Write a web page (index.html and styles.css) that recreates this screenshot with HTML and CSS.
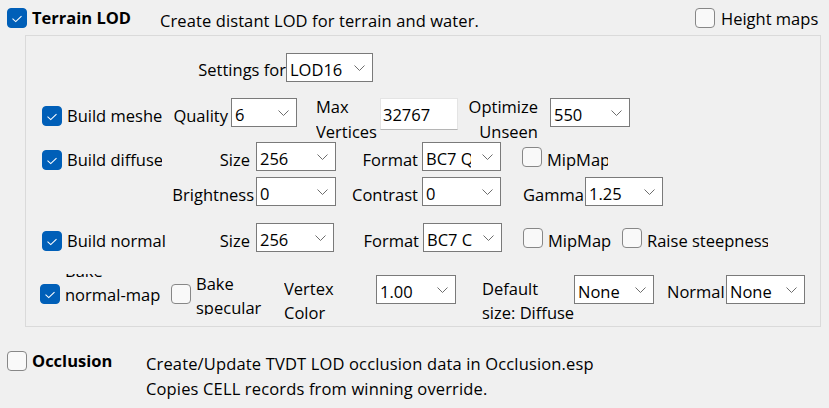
FILE: index.html
```html
<!DOCTYPE html>
<html>
<head>
<meta charset="utf-8">
<link rel="stylesheet" href="styles.css">
</head>
<body>
<div class="header">
  <span class="box on hdr-box"><svg class="tick" viewBox="0 0 20 20"><path d="M5 10.8 L8.6 14 L15 7.8"/></svg></span>
  <span class="title">Terrain LOD</span>
  <span class="hdesc">Create distant LOD for terrain and water.</span>
  <span class="box hm-box"></span>
  <span class="hm-txt">Height maps</span>
</div>

<div class="group">
  <div class="row r-set">
    <span class="lbl l-set">Settings for</span>
    <div class="combo c-lod"><span class="val">LOD16</span><svg class="chev" viewBox="0 0 11 6"><path d="M0.5 0.5 L5.5 5.5 L10.5 0.5"/></svg></div>
  </div>

  <div class="row r1">
    <div class="chk chk-b"><span class="box on"><svg class="tick" viewBox="0 0 20 20"><path d="M5 10.8 L8.6 14 L15 7.8"/></svg></span><span class="ct">Build meshes</span></div>
    <span class="lbl l-quality">Quality</span>
    <div class="combo c-q"><span class="val">6</span><svg class="chev" viewBox="0 0 11 6"><path d="M0.5 0.5 L5.5 5.5 L10.5 0.5"/></svg></div>
    <span class="lbl l-maxv">Max<br>Vertices</span>
    <div class="inp">32767</div>
    <span class="lbl l-opt">Optimize<br>Unseen</span>
    <div class="combo c-550"><span class="val">550</span><svg class="chev" viewBox="0 0 11 6"><path d="M0.5 0.5 L5.5 5.5 L10.5 0.5"/></svg></div>
  </div>

  <div class="row r2">
    <div class="chk chk-b"><span class="box on"><svg class="tick" viewBox="0 0 20 20"><path d="M5 10.8 L8.6 14 L15 7.8"/></svg></span><span class="ct">Build diffuse</span></div>
    <span class="lbl l-size">Size</span>
    <div class="combo c-size"><span class="val">256</span><svg class="chev" viewBox="0 0 11 6"><path d="M0.5 0.5 L5.5 5.5 L10.5 0.5"/></svg></div>
    <span class="lbl l-fmt">Format</span>
    <div class="combo c-fmt"><span class="val">BC7 Quality</span><svg class="chev" viewBox="0 0 11 6"><path d="M0.5 0.5 L5.5 5.5 L10.5 0.5"/></svg></div>
    <div class="chk sm chk-mip"><span class="box"></span><span class="ct">MipMaps</span></div>
  </div>

  <div class="row r3">
    <span class="lbl l-bright">Brightness</span>
    <div class="combo c-size"><span class="val">0</span><svg class="chev" viewBox="0 0 11 6"><path d="M0.5 0.5 L5.5 5.5 L10.5 0.5"/></svg></div>
    <span class="lbl l-fmt">Contrast</span>
    <div class="combo c-fmt"><span class="val">0</span><svg class="chev" viewBox="0 0 11 6"><path d="M0.5 0.5 L5.5 5.5 L10.5 0.5"/></svg></div>
    <span class="lbl l-gamma">Gamma</span>
    <div class="combo c-gamma"><span class="val">1.25</span><svg class="chev" viewBox="0 0 11 6"><path d="M0.5 0.5 L5.5 5.5 L10.5 0.5"/></svg></div>
  </div>

  <div class="row r4">
    <div class="chk chk-b noclip"><span class="box on"><svg class="tick" viewBox="0 0 20 20"><path d="M5 10.8 L8.6 14 L15 7.8"/></svg></span><span class="ct">Build normal</span></div>
    <span class="lbl l-size">Size</span>
    <div class="combo c-size2"><span class="val">256</span><svg class="chev" viewBox="0 0 11 6"><path d="M0.5 0.5 L5.5 5.5 L10.5 0.5"/></svg></div>
    <span class="lbl l-fmt2">Format</span>
    <div class="combo c-fmt"><span class="val">BC7 Compressed</span><svg class="chev" viewBox="0 0 11 6"><path d="M0.5 0.5 L5.5 5.5 L10.5 0.5"/></svg></div>
    <div class="chk sm chk-mip2"><span class="box"></span><span class="ct">MipMap</span></div>
    <div class="chk sm chk-raise"><span class="box"></span><span class="ct">Raise steepness</span></div>
  </div>

  <div class="row r5">
    <div class="chk chk-bnm"><span class="box on"><svg class="tick" viewBox="0 0 20 20"><path d="M5 10.8 L8.6 14 L15 7.8"/></svg></span><span class="cclip cc-top"><span class="cin cin-top">Bake<br>normal-map</span></span></div>
    <div class="chk chk-bs"><span class="box"></span><span class="cclip cc-bot"><span class="cin">Bake<br>specular</span></span></div>
    <span class="lbl l-vc">Vertex<br>Color</span>
    <div class="combo c-100"><span class="val">1.00</span><svg class="chev" viewBox="0 0 11 6"><path d="M0.5 0.5 L5.5 5.5 L10.5 0.5"/></svg></div>
    <span class="lbl l-def">Default<br>size: Diffuse</span>
    <div class="combo c-none"><span class="val">None</span><svg class="chev" viewBox="0 0 11 6"><path d="M0.5 0.5 L5.5 5.5 L10.5 0.5"/></svg></div>
    <span class="lbl l-normal">Normal</span>
    <div class="combo c-none2"><span class="val">None</span><svg class="chev" viewBox="0 0 11 6"><path d="M0.5 0.5 L5.5 5.5 L10.5 0.5"/></svg></div>
  </div>
</div>

<div class="occ">
  <span class="box occ-box"></span>
  <span class="occ-title">Occlusion</span>
  <span class="occ-desc">Create/Update TVDT LOD occlusion data in Occlusion.esp<br>Copies CELL records from winning override.</span>
</div>
</body>
</html>
```

FILE: styles.css
```css
html, body {
  margin: 0;
  padding: 0;
}
body {
  width: 829px;
  height: 408px;
  overflow: hidden;
  background: #f0f0f0;
  color: #000;
  font-family: "Open Sans", "Noto Sans", sans-serif;
  font-size: 16.5px;
  line-height: 24px;
}

/* checkbox */
.box {
  flex: none;
  display: block;
  width: 20px;
  height: 20px;
  box-sizing: border-box;
  border: 1px solid #878787;
  border-radius: 4px;
  background: #f9f9f9;
}
.box.on {
  background: #005fb8;
  border-color: #005fb8;
}
.tick {
  display: block;
  width: 18px;
  height: 18px;
  margin: 0;
}
.tick path {
  fill: none;
  stroke: #fff;
  stroke-width: 1.2;
}

/* header */
.header {
  display: flex;
  align-items: flex-start;
  height: 35px;
}
.hdr-box { margin-left: 7px; margin-top: 8px; }
.title {
  font-weight: 700;
  margin-left: 5px;
  margin-top: 6px;
  width: 128px;
  white-space: nowrap;
}
.hdesc {
  margin-top: 9px;
  width: 535px;
  white-space: nowrap;
  letter-spacing: 0.1px;
}
.hm-box { margin-top: 8px; }
.hm-txt {
  margin-left: 6px;
  margin-top: 7px;
  white-space: nowrap;
}

/* group */
.group {
  margin-left: 25px;
  width: 796px;
  height: 292px;
  box-sizing: border-box;
  border: 1px solid #dadada;
}
.row {
  display: flex;
  align-items: flex-start;
  height: 29px;
}
.lbl {
  flex: none;
  display: block;
  box-sizing: border-box;
  margin-top: 6px;
  white-space: nowrap;
  overflow: hidden;
}

/* combo */
.combo {
  flex: none;
  display: flex;
  align-items: flex-start;
  box-sizing: border-box;
  height: 29px;
  border: 1px solid #7a7a7a;
  background: #fff;
  padding: 4px 0 0 3px;
}
.val {
  flex: 1;
  min-width: 0;
  white-space: nowrap;
  overflow: hidden;
}
.chev {
  flex: none;
  width: 11px;
  height: 6px;
  margin: 7px 7px 0 11px;
}
.chev path {
  fill: none;
  stroke: #6d6d6d;
  stroke-width: 1;
}

/* text input */
.inp {
  flex: none;
  box-sizing: border-box;
  width: 78px;
  height: 32px;
  background: #fff;
  border: 1px solid #e4e4e4;
  border-bottom-color: #b5b5b5;
  padding: 4px 0 0 2px;
}

/* checkbox + label */
.chk {
  flex: none;
  display: flex;
  align-items: flex-start;
}
.chk .box { margin-top: 8px; }
.chk.sm .box { margin-top: 5px; }
.ct {
  flex: 1;
  min-width: 0;
  margin-left: 5px;
  margin-top: 6px;
  white-space: nowrap;
  overflow: hidden;
}
.noclip .ct { overflow: visible; }

.cclip {
  display: block;
  flex: 1;
  min-width: 0;
  margin-left: 5px;
  overflow: hidden;
  white-space: nowrap;
}
.cin { display: block; }

/* settings row */
.r-set { margin-top: 17px; }
.l-set { width: 260px; text-align: right; margin-top: 5px; }
.c-lod { width: 87px; }

/* row 1 */
.r1 { margin-top: 16px; }
.chk-b { margin-left: 16px; width: 120px; }
.l-quality { width: 69px; padding-right: 3px; text-align: right; }
.c-q { width: 66px; }
.l-maxv { margin-left: 19px; width: 64px; line-height: 25px; margin-top: -4px; }
.l-opt { width: 92px; padding-right: 12px; text-align: right; line-height: 25px; margin-top: -4px; }
.c-550 { width: 80px; }

/* row 2 */
.r2 { margin-top: 15px; }
.l-size { width: 94px; padding-right: 6px; text-align: right; }
.c-size { width: 80px; }
.l-fmt { width: 86px; padding-right: 4px; text-align: right; }
.c-fmt { width: 79px; }
.chk-mip { margin-left: 21px; width: 86px; }

/* row 3 */
.r3 { margin-top: 6px; }
.l-bright { width: 230px; padding-right: 2px; text-align: right; }
.l-gamma { margin-left: 22px; width: 62px; }
.c-gamma { width: 78px; }

/* row 4 */
.r4 { margin-top: 17px; }
.c-size2 { width: 78px; }
.l-fmt2 { width: 89px; padding-right: 4px; text-align: right; }
.chk-mip2 { margin-left: 21px; width: 99px; }
.chk-raise { width: 146px; }

/* row 5 */
.r5 { margin-top: 23px; }
.chk-bnm { margin-left: 14px; width: 131px; }
.chk-bnm .box, .chk-bs .box { margin-top: 9px; }
.cc-top { margin-top: -1px; height: 36px; }
.cin-top { margin-top: -15px; }
.chk-bs { width: 113px; }
.cc-bot { margin-top: -3px; height: 43px; }
.l-vc { width: 92px; margin-top: 2px; }
.c-100 { width: 80px; }
.l-def { margin-left: 26px; width: 92px; margin-top: 2px; }
.c-none { width: 80px; }
.l-normal { margin-left: 13px; width: 59px; margin-top: 5px; }
.c-none2 { width: 79px; }

/* occlusion */
.occ {
  display: flex;
  align-items: flex-start;
  margin-top: 24px;
}
.occ-box { margin-left: 7px; }
.occ-title {
  font-weight: 700;
  margin-left: 5px;
  margin-top: -2px;
  width: 114px;
  white-space: nowrap;
}
.occ-desc {
  line-height: 25px;
  white-space: nowrap;
  letter-spacing: 0.15px;
}
```
